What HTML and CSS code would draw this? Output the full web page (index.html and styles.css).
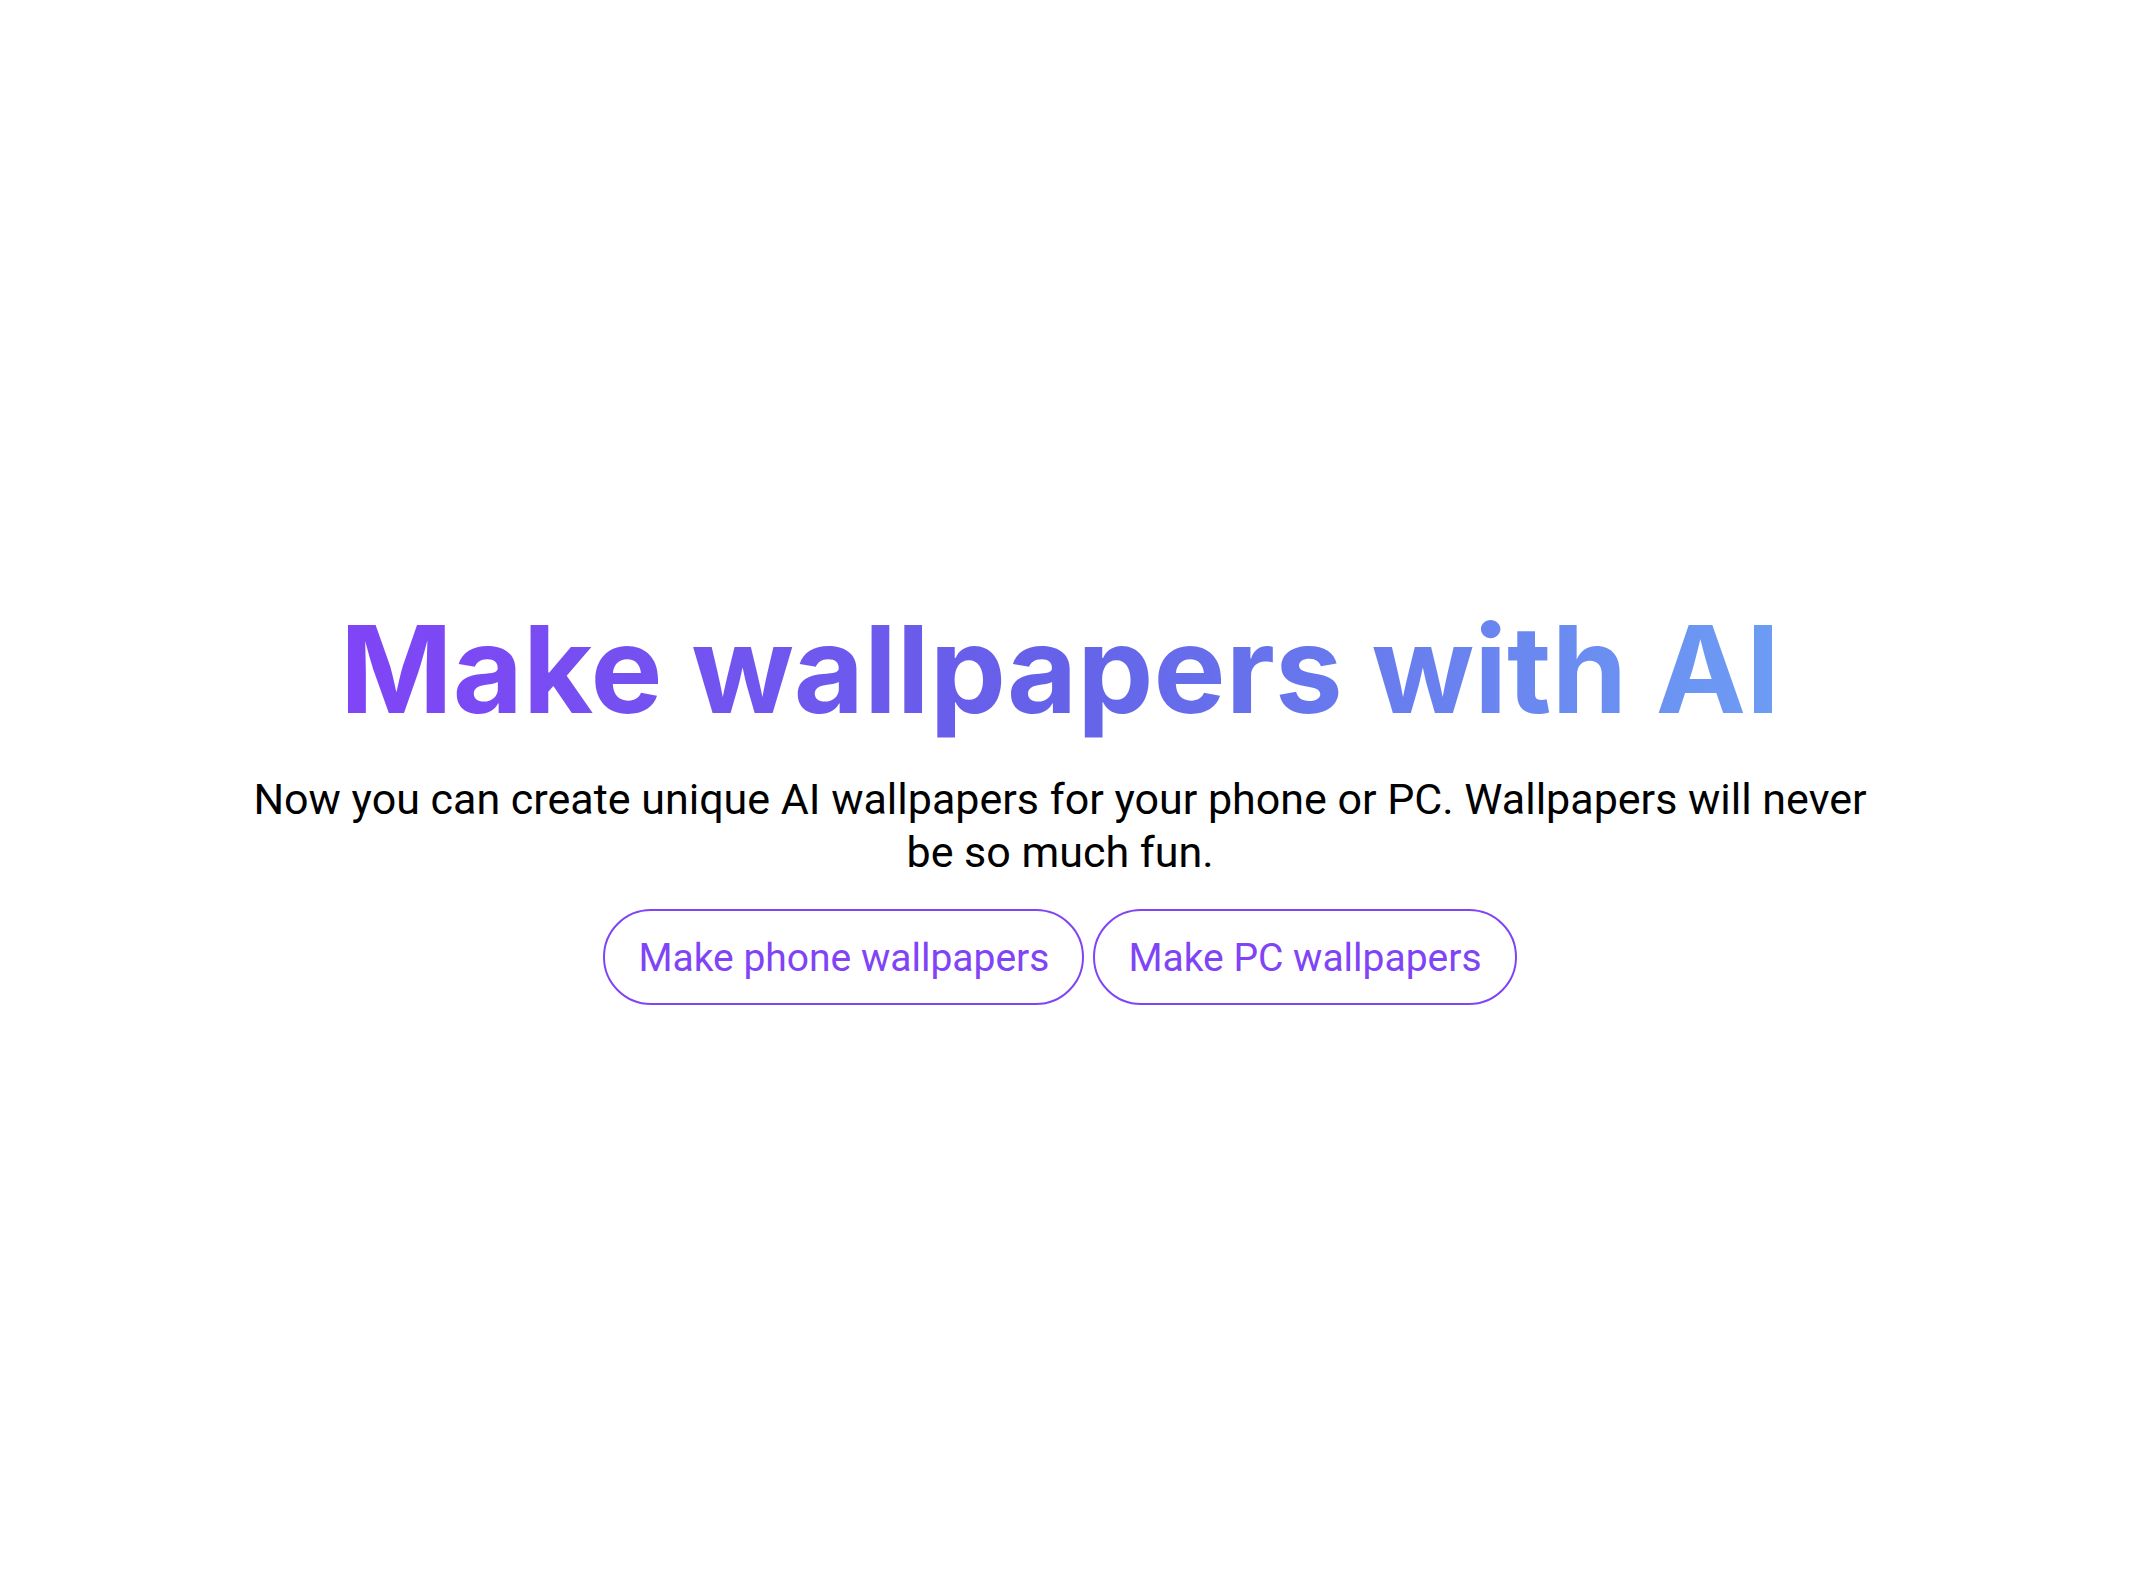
FILE: index.html
```html
<!DOCTYPE html>
<html lang="en">
<head>
<meta charset="utf-8">
<meta name="viewport" content="width=device-width, initial-scale=1">
<title>Make wallpapers with AI</title>
<link rel="stylesheet" href="styles.css">
</head>
<body>
<main class="hero">
  <h1 class="hero-title">Make wallpapers with AI</h1>
  <p class="hero-text">Now you can create unique AI wallpapers for your phone or PC. Wallpapers will never be so much fun.</p>
  <div class="actions">
    <button class="pill" type="button">Make phone wallpapers</button>
    <button class="pill" type="button">Make PC wallpapers</button>
  </div>
</main>
</body>
</html>
```

FILE: styles.css
```css
* {
  box-sizing: border-box;
}

body {
  margin: 0;
  background: #fff;
  color: #000;
  font-family: Roboto, "Liberation Sans", sans-serif;
}

.hero {
  display: flex;
  flex-direction: column;
  align-items: center;
  padding: 589px 50px 0 24px;
  text-align: center;
}

.hero-title {
  margin: 0;
  padding: 0 4px;
  background: linear-gradient(to right, #8044f6, #6562e9 50%, #6d9df4);
  background-clip: text;
  -webkit-background-clip: text;
  color: transparent;
  font-family: Inter, "Liberation Sans", sans-serif;
  font-size: 121px;
  font-weight: 700;
  line-height: 160px;
}

.hero-text {
  max-width: 1630px;
  margin: 24px 0 30px;
  font-size: 43px;
  line-height: 53px;
}

.actions {
  display: flex;
  flex-wrap: wrap;
  justify-content: center;
  gap: 9px;
}

.pill {
  height: 96px;
  padding: 2px 33px 0;
  border: 2px solid #8044f6;
  border-radius: 48px;
  background: transparent;
  color: #8044f6;
  font: inherit;
  font-size: 39px;
}
```
